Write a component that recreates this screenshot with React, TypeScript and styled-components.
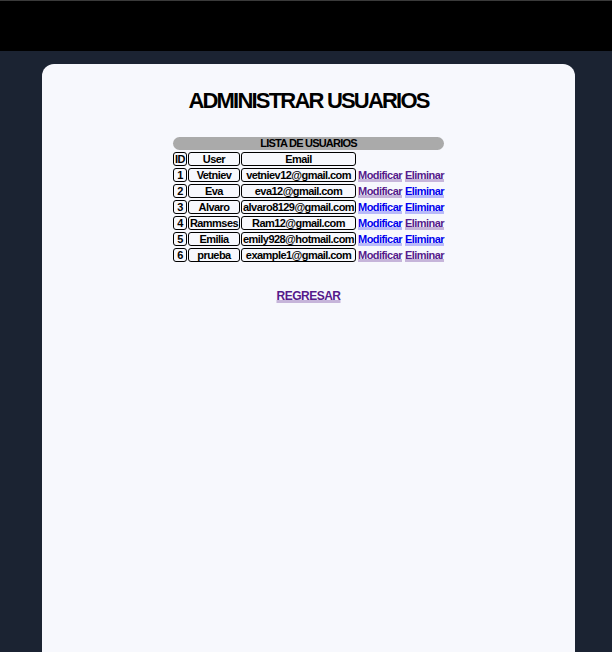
import React from "react";
import styled, { createGlobalStyle } from "styled-components";

const Global = createGlobalStyle`
  html, body { margin: 0; padding: 0; }
  body {
    background: #1b2332;
    font-family: "Liberation Sans", Arial, sans-serif;
    min-height: 652px;
    overflow: hidden;
  }
`;

const TopBar = styled.header`
  height: 50px;
  background: #000;
  border-top: 1px solid #3a3a3a;
`;

const Card = styled.main`
  margin: 13px 0 0 42px;
  width: 533px;
  height: 620px;
  background: #f7f8fd;
  border-radius: 12px 12px 0 0;
  display: flex;
  flex-direction: column;
  align-items: center;
  padding-top: 24px;
  box-sizing: border-box;
`;

const Title = styled.h1`
  margin: 0;
  font-size: 22px;
  letter-spacing: -1.8px;
  font-weight: 700;
  color: #000;
  line-height: 26px;
`;

const Table = styled.table`
  margin-top: 21px;
  border-collapse: separate;
  border-spacing: 1px 2px;
  font-size: 11px;
  letter-spacing: -0.55px;
  font-weight: 700;
  color: #000;
`;

const Caption = styled.th`
  background: #aaaaaa;
  border-radius: 7px;
  height: 13px;
  padding: 0;
  line-height: 13px;
  font-size: 11px;
  letter-spacing: -0.8px;
`;

const Cell = styled.td`
  border: 1px solid #000;
  border-radius: 3px;
  padding: 0 1px;
  height: 12px;
  line-height: 12px;
  text-align: center;
  white-space: nowrap;
`;

const LinkCell = styled.td`
  padding: 0 0 0 1px;
  white-space: nowrap;
  line-height: 12px;
`;

const Link = styled.a<{ $visited?: boolean }>`
  color: ${(p) => (p.$visited ? "#551a8b" : "#0000ee")};
  text-decoration: underline;
  text-decoration-thickness: 3px;
  text-underline-offset: 0px;
  text-decoration-color: ${(p) => (p.$visited ? "rgba(85,26,139,0.3)" : "rgba(0,0,238,0.25)")};
  & + & { margin-left: 3px; }
`;

const Back = styled(Link)`
  margin-top: 25px;
  font-size: 12px;
  letter-spacing: -0.5px;
  font-weight: 700;
`;

const users = [
  { id: 1, user: "Vetniev", email: "vetniev12@gmail.com", m: true, e: true },
  { id: 2, user: "Eva", email: "eva12@gmail.com", m: true, e: false },
  { id: 3, user: "Alvaro", email: "alvaro8129@gmail.com", m: false, e: false },
  { id: 4, user: "Rammses", email: "Ram12@gmail.com", m: false, e: true },
  { id: 5, user: "Emilia", email: "emily928@hotmail.com", m: false, e: false },
  { id: 6, user: "prueba", email: "example1@gmail.com", m: true, e: true },
];

export default function App() {
  return (
    <>
      <Global />
      <TopBar />
      <Card>
        <Title>ADMINISTRAR USUARIOS</Title>
        <Table>
          <thead>
            <tr>
              <Caption colSpan={4}>LISTA DE USUARIOS</Caption>
            </tr>
            <tr>
              <Cell as="th">ID</Cell>
              <Cell as="th">User</Cell>
              <Cell as="th">Email</Cell>
              <LinkCell />
            </tr>
          </thead>
          <tbody>
            {users.map((u) => (
              <tr key={u.id}>
                <Cell>{u.id}</Cell>
                <Cell>{u.user}</Cell>
                <Cell>{u.email}</Cell>
                <LinkCell>
                  <Link href="#" $visited={u.m}>Modificar</Link>
                  <Link href="#" $visited={u.e}>Eliminar</Link>
                </LinkCell>
              </tr>
            ))}
          </tbody>
        </Table>
        <Back href="#" $visited>REGRESAR</Back>
      </Card>
    </>
  );
}
